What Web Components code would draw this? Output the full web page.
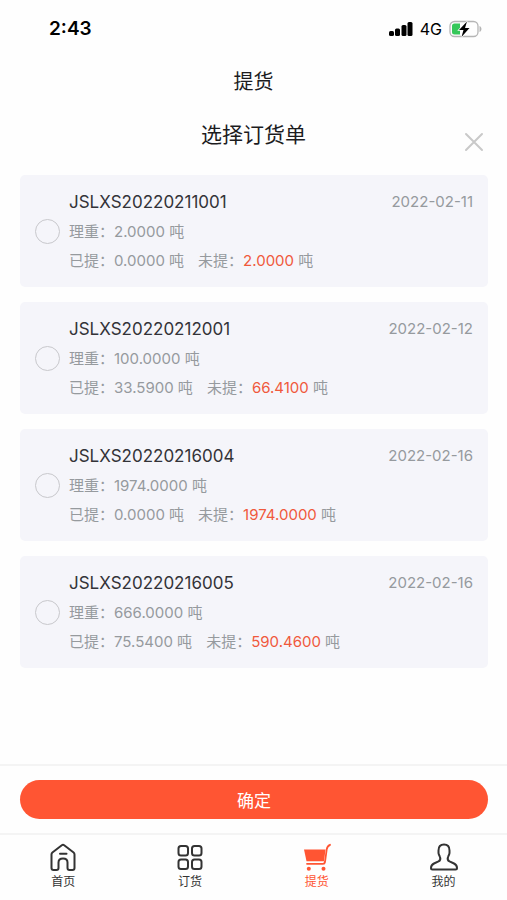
<!DOCTYPE html>
<html lang="zh-CN">
<head>
<meta charset="utf-8">
<meta name="viewport" content="width=device-width, initial-scale=1">
<title>提货</title>
<style>
    body {
        margin: 0;
        background-color: #fefefe;
        font-family: Inter, "Noto Sans CJK SC", sans-serif;
    }
</style>
</head>
<body>
<pickup-page-component></pickup-page-component>

<script>
class StatusBarComponent extends HTMLElement
{
    constructor()
    {
        super();
        this.shadow = this.attachShadow({ mode:"open" })
    }
    connectedCallback()
    {
        this.render();
    }
    style ()
    {
        return `
            <style>
                :host {
                    display: flex;
                    align-items: center;
                    justify-content: space-between;
                    height: 57px;
                    padding: 0 24px 0 49px;
                    color: #000;
                }
                time {
                    font-size: 19px;
                    font-weight: 600;
                }
                .signals {
                    display: flex;
                    align-items: center;
                    gap: 7px;
                    font-size: 16px;
                }
                svg {
                    display: block;
                }
            </style>
        `
    }
    render()
    {
        this.shadow.innerHTML = `
            ${this.style()}
            <time>${this.getAttribute("time")}</time>
            <div class="signals">
                <svg width="24" height="16" viewBox="0 0 24 16" aria-hidden="true">
                    <rect x="0" y="10" width="5" height="5" rx="1.5"/>
                    <rect x="6" y="7.5" width="5" height="7.5" rx="1.5"/>
                    <rect x="12.500" y="4" width="5" height="11" rx="1.5"/>
                    <rect x="18.500" y="1" width="5" height="14" rx="1.5"/>
                </svg>
                <span>${this.getAttribute("network")}</span>
                <svg width="34" height="18" viewBox="0 0 34 18" aria-hidden="true">
                    <rect x="1" y="1.5" width="28" height="15" rx="4.5" fill="none" stroke="#b5b5b5" stroke-width="1.3"/>
                    <path d="M30.500 6c2.600 1 2.600 5 0 6z" fill="#b5b5b5"/>
                    <path d="M5.500 3.500H11v11H5.500a2.500 2.500 0 0 1-2.500-2.500V6a2.500 2.500 0 0 1 2.500-2.500z" fill="#35c759"/>
                    <path d="M18 1.500 10 10h4.500l-2 7L20.500 8H16z" stroke="#fefefe" stroke-width="1.500" paint-order="stroke"/>
                </svg>
            </div>
        `
    }
}
customElements.define("status-bar-component", StatusBarComponent)

class PageHeaderComponent extends HTMLElement
{
    constructor()
    {
        super();
        this.shadow = this.attachShadow({ mode:"open" })
    }
    connectedCallback()
    {
        this.render();
    }
    style ()
    {
        return `
            <style>
                :host {
                    display: block;
                    color: #1c1c1e;
                    text-align: center;
                }
                h1, h2 {
                    margin: 0;
                    font-size: 20px;
                    font-weight: 400;
                    line-height: 50px;
                }
                .dialog-title {
                    display: grid;
                    grid-template-columns: 28px 1fr 28px;
                    align-items: center;
                    padding: 3px 19px 0;
                }
                h2 {
                    grid-column: 2;
                    font-size: 21px;
                }
                button {
                    display: flex;
                    justify-content: center;
                    align-items: flex-end;
                    width: 28px;
                    height: 34px;
                    padding: 0;
                    border: 0;
                    background: none;
                    cursor: pointer;
                }
            </style>
        `
    }
    render()
    {
        this.shadow.innerHTML = `
            ${this.style()}
            <h1><slot name="title"></slot></h1>
            <div class="dialog-title">
                <h2><slot name="subtitle"></slot></h2>
                <button type="button" aria-label="关闭">
                    <svg width="20" height="20" viewBox="0 0 20 20" fill="none" stroke="#c9c9c9" stroke-width="2" stroke-linecap="round">
                        <path d="M2 2l16 16M18 2 2 18"/>
                    </svg>
                </button>
            </div>
        `
    }
}
customElements.define("page-header-component", PageHeaderComponent)

class OrderCardComponent extends HTMLElement
{
    constructor()
    {
        super();
        this.shadow = this.attachShadow({ mode:"open" })
    }
    connectedCallback()
    {
        this.render();
    }
    style ()
    {
        return `
            <style>
                :host {
                    display: block;
                    border-radius: 5px;
                    background-color: #f5f5fa;
                }
                label {
                    display: flex;
                    align-items: center;
                    gap: 9px;
                    padding: 12px 15px;
                    cursor: pointer;
                }
                input {
                    appearance: none;
                    flex: none;
                    width: 25px;
                    height: 25px;
                    margin: 0;
                    border: 1px solid #c8c8cc;
                    border-radius: 50%;
                }
                input:checked {
                    border: 7px solid #ff5533;
                }
                .info {
                    flex: 1;
                    color: #969a9e;
                    font-size: 15px;
                    line-height: 29px;
                }
                .head {
                    display: flex;
                    justify-content: space-between;
                    line-height: 30px;
                }
                .code {
                    color: #333338;
                    font-size: 17px;
                }
                .amounts {
                    display: flex;
                    gap: 14px;
                }
                em {
                    color: #f0593c;
                    font-style: normal;
                }
            </style>
        `
    }
    render()
    {
        this.shadow.innerHTML = `
            ${this.style()}
            <label>
                <input type="radio" name="order" value="${this.getAttribute("code")}">
                <div class="info">
                    <div class="head">
                        <span class="code">${this.getAttribute("code")}</span>
                        <time>${this.getAttribute("date")}</time>
                    </div>
                    <div>理重：${this.getAttribute("weight")} 吨</div>
                    <div class="amounts">
                        <span>已提：${this.getAttribute("taken")} 吨</span>
                        <span>未提：<em>${this.getAttribute("rest")}</em> 吨</span>
                    </div>
                </div>
            </label>
        `
    }
    clear()
    {
        this.shadow.querySelector("input").checked = false
    }
}
customElements.define("order-card-component", OrderCardComponent)

class OrderListComponent extends HTMLElement
{
    constructor()
    {
        super();
        this.shadow = this.attachShadow({ mode:"open" })
    }
    connectedCallback()
    {
        this.render();
        // radios live in separate shadow roots, so the group is kept here
        this.addEventListener("click", (event) => {
            const card = event.target.closest("order-card-component")
            if (!card) return
            this.querySelectorAll("order-card-component").forEach((other) => {
                if (other !== card) other.clear()
            })
        })
    }
    style ()
    {
        return `
            <style>
                :host {
                    display: flex;
                    flex-direction: column;
                    gap: 15px;
                    padding: 15px 19px 15px 20px;
                }
            </style>
        `
    }
    render()
    {
        this.shadow.innerHTML = `
            ${this.style()}
            <slot></slot>
        `
    }
}
customElements.define("order-list-component", OrderListComponent)

class ConfirmBarComponent extends HTMLElement
{
    constructor()
    {
        super();
        this.shadow = this.attachShadow({ mode:"open" })
    }
    connectedCallback()
    {
        this.render();
    }
    style ()
    {
        return `
            <style>
                :host {
                    display: block;
                    padding: 14px 19px 14px 20px;
                    border-top: 2px solid #f4f4f4;
                }
                button {
                    display: block;
                    width: 100%;
                    height: 39px;
                    padding: 0;
                    border: 0;
                    border-radius: 20px;
                    background-color: #ff5533;
                    color: #fff;
                    font-family: inherit;
                    font-size: 17px;
                    cursor: pointer;
                }
            </style>
        `
    }
    render()
    {
        this.shadow.innerHTML = `
            ${this.style()}
            <button type="button"><slot></slot></button>
        `
    }
}
customElements.define("confirm-bar-component", ConfirmBarComponent)

class TabItemComponent extends HTMLElement
{
    constructor()
    {
        super();
        this.shadow = this.attachShadow({ mode:"open" })
    }
    connectedCallback()
    {
        this.render();
    }
    icon ()
    {
        const icons = {
            home: `
                <path d="M2.500 11.500Q2.500 10.300 3.400 9.500L12.800 2.300Q14 1.400 15.200 2.300L24.600 9.500Q25.500 10.300 25.500 11.500V25Q25.500 27 23.500 27H20.500Q18.500 27 18.500 25V19.500Q18.500 15.500 14 15.500T9.500 19.500V25Q9.500 27 7.500 27H4.500Q2.500 27 2.500 25Z"/>
                <path d="M11 10.800h6.500"/>`,
            grid: `
                <rect x="2.5" y="3" width="9.500" height="9.500" rx="2.5"/>
                <rect x="16" y="3" width="9.500" height="9.500" rx="2.5"/>
                <rect x="2.5" y="16.5" width="9.500" height="9.500" rx="2.5"/>
                <rect x="16" y="16.5" width="9.500" height="9.500" rx="2.5"/>`,
            cart: `
                <path d="M1 6.500H22.500L21 18.300H3.500Z" fill="currentColor" stroke="none"/>
                <path d="M4 20.800H20Q21.700 20.800 22 19L23.700 6.500Q24.200 3 27 1.800" stroke-width="1.800"/>
                <circle cx="5.800" cy="25.800" r="2" fill="currentColor" stroke="none"/>
                <circle cx="20.500" cy="25.800" r="2" fill="currentColor" stroke="none"/>`,
            user: `
                <path d="M14 1.500C10.500 1.500 8.500 4 8.500 7.500V10C8.500 11.500 9.500 12.500 10 14C10.800 16.200 10.500 17.400 8.500 18.400L4 20.500C2 21.500 1 23 1 25Q1 26.500 2.500 26.500H25.500Q27 26.500 27 25C27 23 26 21.500 24 20.500L19.500 18.400C17.500 17.400 17.200 16.200 18 14C18.500 12.500 19.500 11.500 19.500 10V7.500C19.500 4 17.500 1.500 14 1.500Z"/>`
        }
        return icons[this.getAttribute("icon")]
    }
    style ()
    {
        return `
            <style>
                :host {
                    display: block;
                    flex: 1;
                }
                a {
                    display: flex;
                    flex-direction: column;
                    align-items: center;
                    padding: 8px 0;
                    color: #333;
                    font-size: 12px;
                    line-height: 21px;
                    text-decoration: none;
                }
                :host([active]) a {
                    color: #ff5533;
                }
                svg {
                    display: block;
                }
            </style>
        `
    }
    render()
    {
        this.shadow.innerHTML = `
            ${this.style()}
            <a href="#">
                <svg width="28" height="28" viewBox="0 0 28 28" fill="none" stroke="currentColor" stroke-width="2" stroke-linecap="round" stroke-linejoin="round" aria-hidden="true">
                    ${this.icon()}
                </svg>
                <slot></slot>
            </a>
        `
    }
}
customElements.define("tab-item-component", TabItemComponent)

class TabbarComponent extends HTMLElement
{
    constructor()
    {
        super();
        this.shadow = this.attachShadow({ mode:"open" })
    }
    connectedCallback()
    {
        this.render();
    }
    style ()
    {
        return `
            <style>
                :host {
                    display: block;
                    border-top: 2px solid #f4f4f4;
                }
                nav {
                    display: flex;
                }
            </style>
        `
    }
    render()
    {
        this.shadow.innerHTML = `
            ${this.style()}
            <nav>
                <tab-item-component icon="home">首页</tab-item-component>
                <tab-item-component icon="grid">订货</tab-item-component>
                <tab-item-component icon="cart" active>提货</tab-item-component>
                <tab-item-component icon="user">我的</tab-item-component>
            </nav>
        `
    }
}
customElements.define("tabbar-component", TabbarComponent)

class PickupPageComponent extends HTMLElement
{
    constructor()
    {
        super();
        this.shadow = this.attachShadow({ mode:"open" })
    }
    connectedCallback()
    {
        this.render();
    }
    style ()
    {
        return `
            <style>
                :host {
                    display: flex;
                    flex-direction: column;
                    min-height: 100vh;
                }
                main {
                    flex: 1;
                }
            </style>
        `
    }
    render()
    {
        this.shadow.innerHTML = `
            ${this.style()}
            <status-bar-component time="2:43" network="4G"></status-bar-component>
            <page-header-component>
                <span slot="title">提货</span>
                <span slot="subtitle">选择订货单</span>
            </page-header-component>
            <main>
                <order-list-component>
                    <order-card-component code="JSLXS20220211001" date="2022-02-11" weight="2.0000" taken="0.0000" rest="2.0000"></order-card-component>
                    <order-card-component code="JSLXS20220212001" date="2022-02-12" weight="100.0000" taken="33.5900" rest="66.4100"></order-card-component>
                    <order-card-component code="JSLXS20220216004" date="2022-02-16" weight="1974.0000" taken="0.0000" rest="1974.0000"></order-card-component>
                    <order-card-component code="JSLXS20220216005" date="2022-02-16" weight="666.0000" taken="75.5400" rest="590.4600"></order-card-component>
                </order-list-component>
            </main>
            <confirm-bar-component>确定</confirm-bar-component>
            <tabbar-component></tabbar-component>
        `
    }
}
customElements.define("pickup-page-component", PickupPageComponent)
</script>
</body>
</html>
